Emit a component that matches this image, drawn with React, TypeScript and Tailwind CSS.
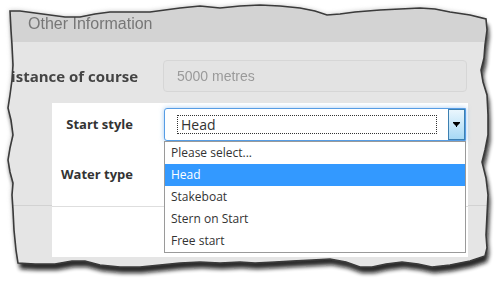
import React from "react";

const TORN =
  "M10,11 L20,11 L35,13 L50,15 L65,17 L80,17 L95,14 L110,12 L130,12 L150,12 L165,10 L180,8 L200,6 L220,8 L240,6 L260,5 L280,6 L300,8 L315,11 L327,15 L340,14 L355,12 L380,10 L400,9 L420,8 L435,9 L450,12 L470,15 L486,19 " +
  "L487,30 L485,45 L484,58 L481,70 L483,82 L487,95 L488,115 L488,135 L485,150 L482,162 L486,178 L488,195 L487,215 L486,235 L487,248 L485,256 " +
  "L470,261 L450,265 L432,267 L418,264 L402,262 L386,264 L372,267 L360,267 L346,262 L330,259 L312,260 L292,261 L275,262 L255,263 L240,262 L220,263 L200,262 L180,263 L160,265 L140,267 L120,267 L100,265 L85,261 L72,261 L55,264 L35,264 L18,263 " +
  "L16,250 L14,230 L13,210 L12,195 L13,183 L10,172 L8,160 L10,148 L13,135 L11,120 L8,108 L10,95 L12,80 L13,65 L12,45 L11,30 Z";

const items = ["Please select...", "Head", "Stakeboat", "Stern on Start", "Free start"];

export default function App() {
  return (
    <div className="relative w-[501px] h-[282px] bg-white overflow-hidden">
      <svg className="absolute inset-0" width="501" height="282" viewBox="0 0 501 282">
        <defs>
          <filter id="sh" x="-10%" y="-10%" width="120%" height="120%">
            <feGaussianBlur stdDeviation="2.2" />
          </filter>
          <clipPath id="torn" clipPathUnits="userSpaceOnUse">
            <path d={TORN} />
          </clipPath>
        </defs>
        <path d={TORN} fill="#111" opacity="0.9" transform="translate(2,6)" filter="url(#sh)" />
        <path d={TORN} fill="#999" opacity="0.5" transform="translate(-1,-1)" filter="url(#sh)" />
      </svg>

      <div className="relative w-[501px] h-[282px] bg-[#e5e5e5] [clip-path:url(#torn)] font-['Open_Sans',sans-serif]">
        <div className="h-[42px] bg-[#d3d3d3] pl-[28px] pt-[14px] text-[16px] leading-[20px] text-[#777] font-['Liberation_Sans',Arial,sans-serif] blur-[0.7px]">
          Other Information
        </div>
        <div className="mt-[18px] h-[32px] flex items-center blur-[0.7px]">
          <div className="w-[133px] text-right font-bold text-[15px] text-[#444] whitespace-nowrap">
            Distance of course
          </div>
          <div className="ml-[30px] w-[304px] h-[32px] rounded-[4px] border border-[#d6d6d6] bg-[#e3e3e3] flex items-center pl-[13px] text-[14px] text-[#9a9a9a] font-['Liberation_Sans',Arial,sans-serif]">
            5000 metres
          </div>
        </div>
        <div className="mt-[11px] flex">
          <div className="w-[52px] h-[103px] border-b border-[#d2d2d2]" />
          <div className="relative w-[416px] h-[154px] bg-white">
            <div className="mt-[5px] h-[33px] flex items-center">
              <div className="w-[81px] text-right font-bold text-[13px] text-[#333] whitespace-nowrap">Start style</div>
              <div className="ml-[31px] w-[302px] h-[33px] flex border border-[#569de5] rounded-l-[3px] shadow-[0_0_5px_rgba(86,157,229,0.55)] bg-white">
                <div className="flex-1 pl-[12px] pr-[11px] flex items-center">
                  <div className="flex-1 h-[19px] border border-dotted border-[#333] flex items-center pl-[3px] text-[14px] text-[#333]">
                    Head
                  </div>
                </div>
                <div className="w-[17px] h-full border border-[#3c7fb1] bg-gradient-to-b from-[#eaf6fd] to-[#a7d9f5] flex items-center justify-center">
                  <svg width="7" height="5" viewBox="0 0 7 5">
                    <path d="M0,0 H7 V1 L4,4 V5 H3 V4 L0,1 Z" fill="#000" />
                  </svg>
                </div>
              </div>
            </div>
            <div className="mt-[17px] h-[33px] flex items-center">
              <div className="w-[81px] text-right font-bold text-[13px] text-[#333] whitespace-nowrap">Water type</div>
            </div>
            <div className="mt-[15px] border-t border-[#dedede]" />
            <div className="absolute left-[112px] top-[38px] w-[302px] border border-[#9a9a9a] bg-white">
              {items.map((it, i) => (
                <div
                  key={it}
                  className={
                    i === 1
                      ? "h-[22px] pl-[6px] flex items-center text-[12px] bg-[#3399ff] text-white"
                      : "h-[22px] pl-[6px] flex items-center text-[12px] text-[#333]"
                  }
                >
                  {it}
                </div>
              ))}
            </div>
          </div>
          <div className="flex-1 h-[103px] border-b border-[#d2d2d2]" />
        </div>
      </div>

      <svg className="absolute inset-0 pointer-events-none" width="501" height="282" viewBox="0 0 501 282">
        <defs>
          <filter id="ed" x="-10%" y="-10%" width="120%" height="120%">
            <feGaussianBlur stdDeviation="0.6" />
          </filter>
        </defs>
        <path d={TORN} fill="none" stroke="#3a3a3a" strokeWidth="1.6" filter="url(#ed)" />
      </svg>
    </div>
  );
}
